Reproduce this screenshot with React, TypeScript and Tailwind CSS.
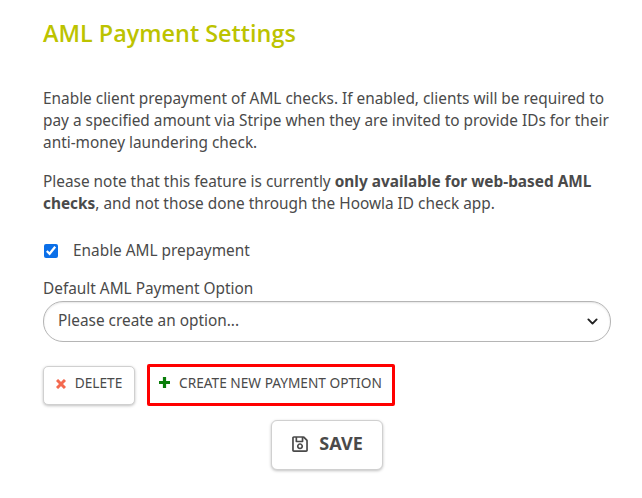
import React from "react";
import { FaRegSave } from "react-icons/fa";

export default function App() {
  return (
    <div className="w-[642px] h-[498px] bg-white overflow-hidden pl-[43px] pr-[31px] pt-[17px] text-[#4a4a4a] text-[15.38px] leading-[22px] font-['Noto_Sans',sans-serif]">
      <h1 className="text-[23.4px] leading-[32px] font-semibold text-[#bcc300] font-['Open_Sans',sans-serif]">AML Payment Settings</h1>
      <p className="mt-[39px]">Enable client prepayment of AML checks. If enabled, clients will be required to pay a specified amount via Stripe when they are invited to provide IDs for their anti-money laundering check.</p>
      <p className="mt-[17px]">Please note that this feature is currently <b>only available for web-based AML checks</b>, and not those done through the Hoowla ID check app.</p>
      <label className="mt-[25px] flex items-center h-[22px]">
        <input type="checkbox" defaultChecked readOnly className="w-[14px] h-[14px] accent-[#0b6fe8] m-0 ml-px" />
        <span className="ml-[15px]">Enable AML prepayment</span>
      </label>
      <div className="mt-[16px]">Default AML Payment Option</div>
      <div className="mt-[1px] h-[41px] w-[568px] rounded-[20px] border border-[#b5b5b5] flex items-center justify-between pl-[14px] pr-[12px] shadow-[inset_0_1px_2px_rgba(0,0,0,0.1)]">
        <span className="-mt-[2px]">Please create an option...</span>
        <svg width="11" height="11" viewBox="0 0 16 16" fill="none" stroke="#222" strokeWidth="2.8" strokeLinecap="round" strokeLinejoin="round"><path d="M2 5l6 6 6-6" /></svg>
      </div>
      <div className="mt-[22px] flex items-center gap-[12px]">
        <button className="h-[39px] w-[92px] rounded-[5px] border border-[#d0d0d0] shadow-[0_1px_3px_rgba(0,0,0,0.25)] flex items-center justify-center gap-[9px] text-[13.7px] bg-white">
          <svg width="10" height="10" viewBox="0 0 10 10" fill="none" stroke="#f4694f" strokeWidth="3" className="-mt-[2px]"><path d="M1 1l8 8M9 1l-8 8" /></svg>
          <span className="-mt-[5px]">DELETE</span>
        </button>
        <div className="h-[42px] w-[248px] border-[3px] border-[#ff0000] rounded-[2px] flex items-center pl-[9px] gap-[8px] text-[13.7px]">
          <svg width="11" height="11" viewBox="0 0 11 11" fill="none" stroke="#0a7d0a" strokeWidth="3.2" className="-mt-[5px]"><path d="M5.5 0v11M0 5.5h11" /></svg>
          <span className="-mt-[4px] ml-px">CREATE NEW PAYMENT OPTION</span>
        </div>
      </div>
      <div className="mt-[14px] flex justify-center">
        <button className="h-[50px] w-[112px] rounded-[6px] border border-[#d0d0d0] shadow-[0_1px_3px_rgba(0,0,0,0.25)] flex items-center justify-center gap-[10px] text-[18px] font-bold bg-white">
          <FaRegSave className="text-[18px] -mt-[2px]" /> <span className="-mt-[5px]">SAVE</span>
        </button>
      </div>
    </div>
  );
}
